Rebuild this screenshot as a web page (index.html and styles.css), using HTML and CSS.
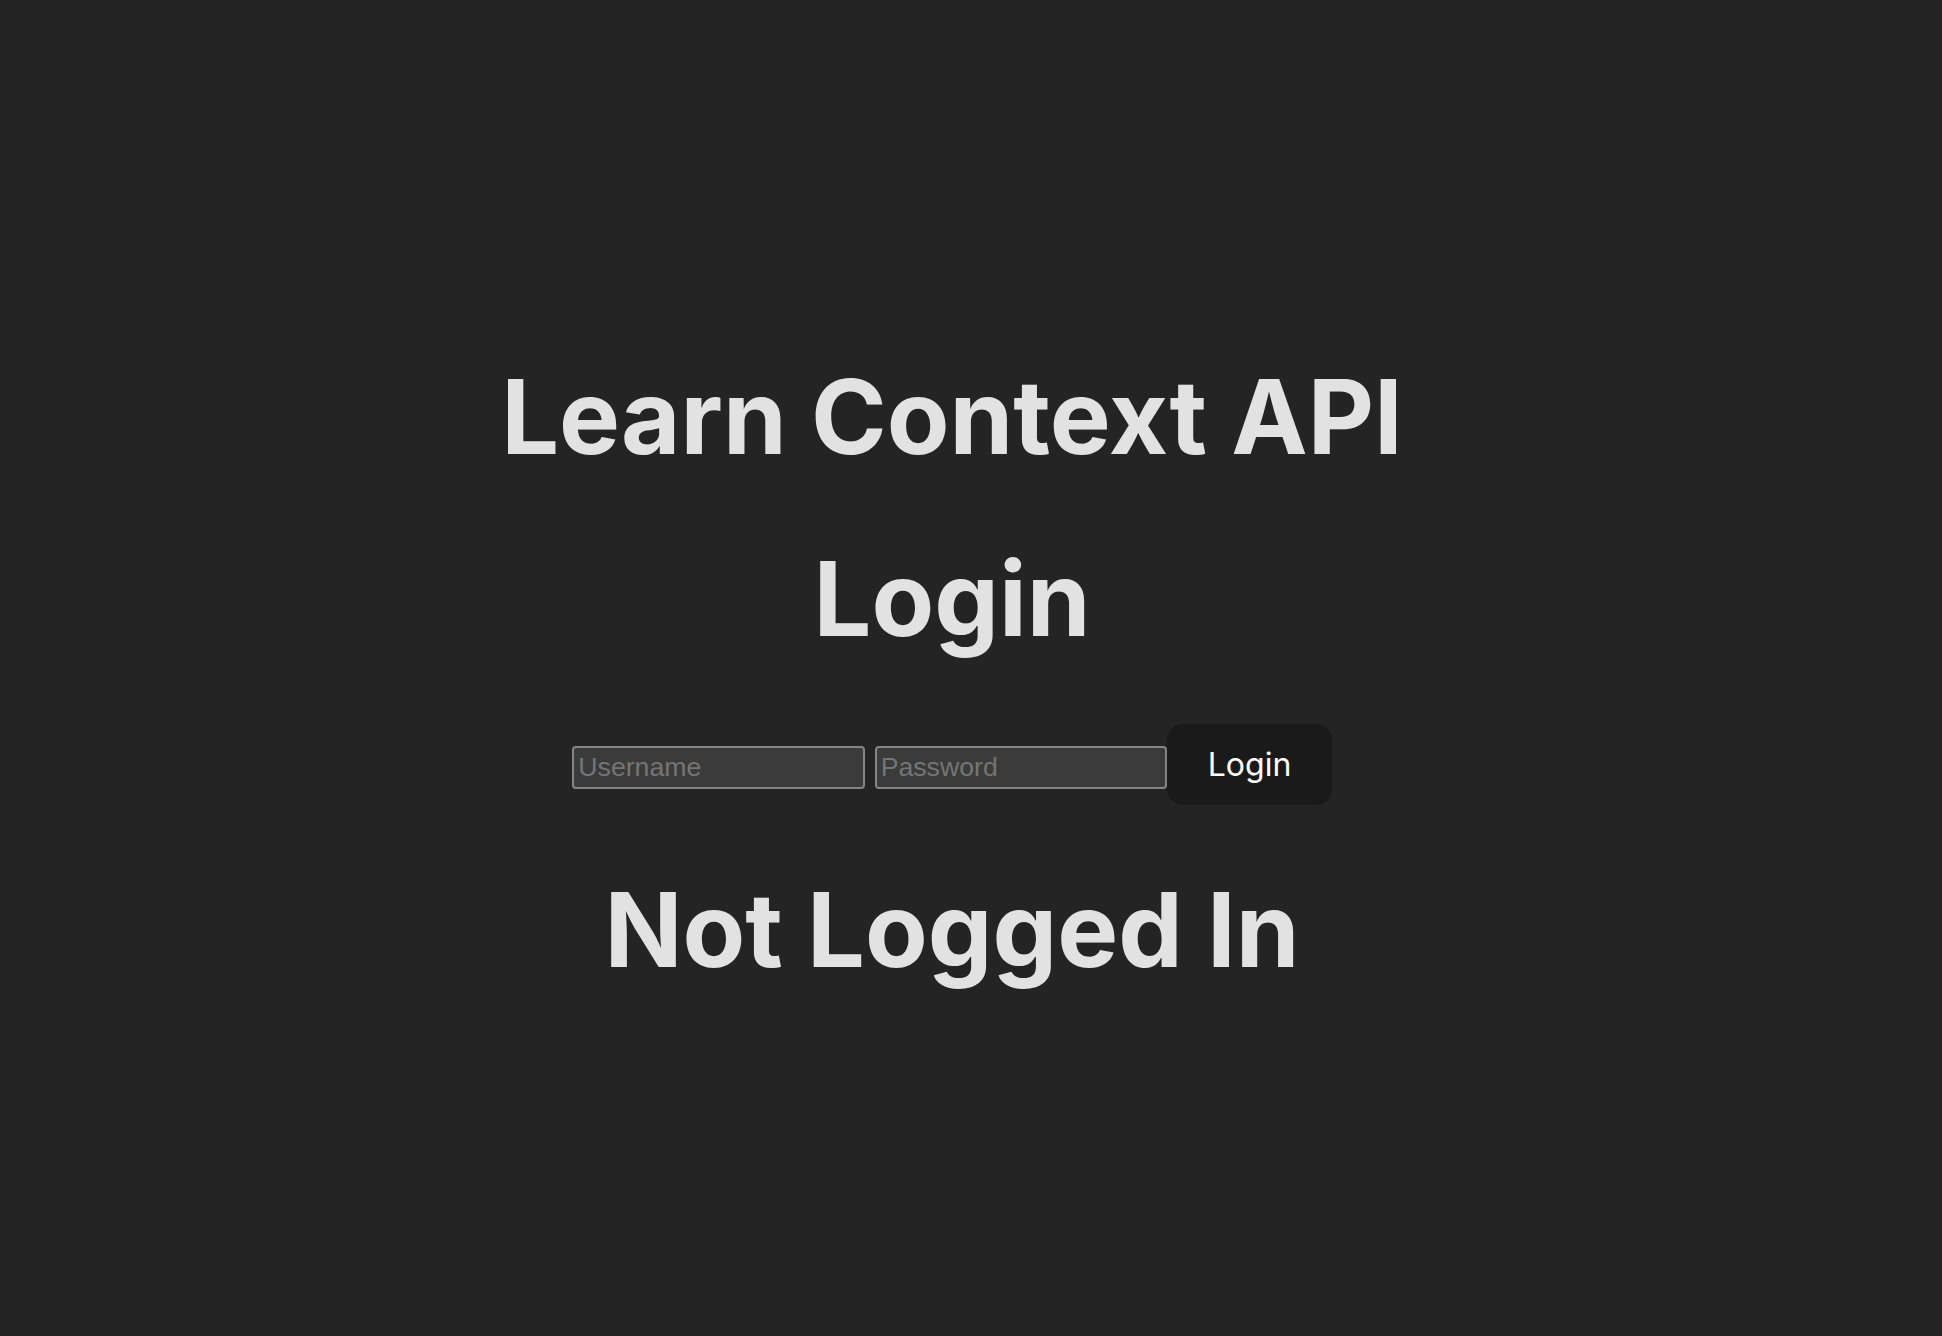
FILE: index.html
```html
<!DOCTYPE html>
<html lang="en">
<head>
<meta charset="UTF-8">
<title>Learn Context API</title>
<link rel="stylesheet" href="styles.css">
</head>
<body>
<div class="root">
  <h1 class="heading">Learn Context API</h1>
  <div class="login">
    <h1 class="heading">Login</h1>
    <div class="form-row">
      <input class="field field-user" type="text" placeholder="Username">
      <input class="field" type="password" placeholder="Password">
      <button class="btn" type="button">Login</button>
    </div>
  </div>
  <div class="profile">
    <h1 class="heading">Not Logged In</h1>
  </div>
</div>
</body>
</html>
```

FILE: styles.css
```css
html {
  color-scheme: dark;
}

body {
  margin: 0;
  padding: 12px 38px 0 0;
  min-height: 100vh;
  display: flex;
  align-items: center;
  justify-content: center;
  background: #242424;
  color: rgba(255, 255, 255, 0.87);
  font-family: Inter, "Noto Sans", sans-serif;
  font-size: 32px;
  line-height: 1.5;
  font-weight: 400;
  box-sizing: border-box;
}

.root {
  max-width: 2560px;
  padding: 64px;
  text-align: center;
}

.heading {
  font-size: 102.4px;
  line-height: 1.1;
  font-weight: 700;
  margin: 68.6px 0;
}

.form-row {
  display: flex;
  justify-content: center;
  align-items: baseline;
}

.field {
  box-sizing: border-box;
  width: 292.7px;
  height: 42.3px;
  padding: 2px 4px;
  border: 2px solid #858585;
  border-radius: 4px;
  background: #3b3b3b;
  color: #ffffff;
  font-family: "Liberation Sans", Arial, sans-serif;
  font-size: 26.67px;
  outline: none;
}

.field::placeholder {
  color: #757575;
}

.field-user {
  margin-right: 9.7px;
}

.btn {
  border-radius: 16px;
  border: 2px solid transparent;
  padding: 19.2px 38.4px;
  font-size: 32px;
  font-weight: 400;
  font-family: Inter, "Noto Sans", sans-serif;
  line-height: normal;
  background-color: #1a1a1a;
  color: #ffffff;
  cursor: pointer;
}
```
